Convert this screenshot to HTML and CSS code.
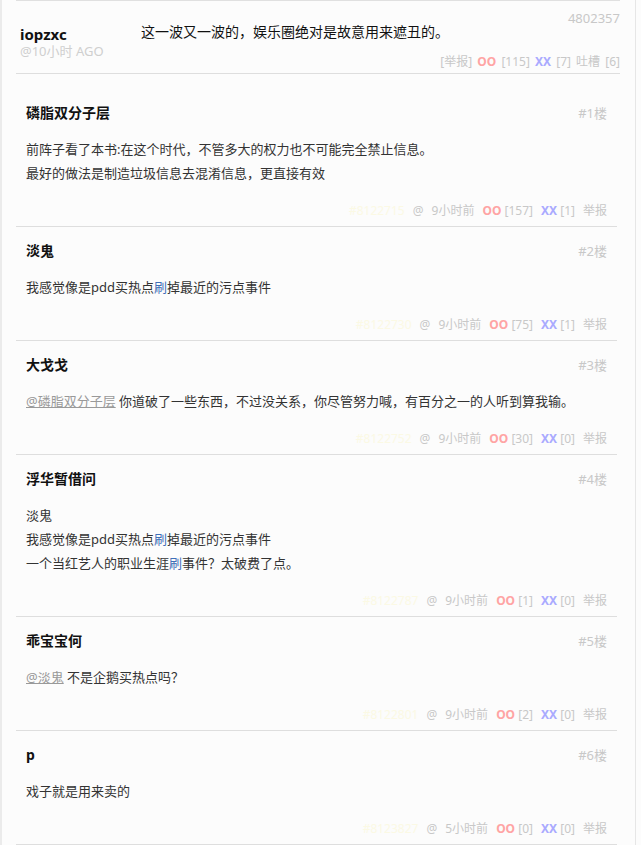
FILE: index.html
```html
<!DOCTYPE html>
<html>
<head>
	<meta charset="utf-8">
	<meta name="viewport" content="width=device-width, initial-scale=1">
	<title>吐槽</title>
	<link rel="stylesheet" href="styles.css">
</head>
<body>
<div class="page">
<div class="thread">

	<!-- main post -->
	<div class="post">
		<div class="post-id">4802357</div>
		<div class="post-row">
			<div class="author">
				<div class="author-name">iopzxc</div>
				<div class="author-time">@10小时 AGO</div>
			</div>
			<div class="post-main">
				<div class="post-text">这一波又一波的，娱乐圈绝对是故意用来遮丑的。</div>
				<div class="post-actions">
					<span class="gray">[举报]</span>
					<span class="oo">OO</span> <span class="gray">[115]</span>
					<span class="xx">XX</span> <span class="gray">[7]</span>
					<span class="gray">吐槽 [6]</span>
				</div>
			</div>
		</div>
	</div>

	<!-- comments -->
	<div class="comments">
		<div class="comment">
			<div class="comment-head">
				<span class="comment-name">磷脂双分子层</span>
				<span class="floor">#1楼</span>
			</div>
			<div class="comment-body">
				前阵子看了本书:在这个时代，不管多大的权力也不可能完全禁止信息。<br>
				最好的做法是制造垃圾信息去混淆信息，更直接有效
			</div>
			<div class="comment-foot">
				<span class="cid">#8122715</span>
				<span class="gray">@</span>
				<span class="gray">9小时前</span>
				<span><span class="oo">OO</span> <span class="gray">[157]</span></span>
				<span><span class="xx">XX</span> <span class="gray">[1]</span></span>
				<span class="gray">举报</span>
			</div>
		</div>

		<div class="comment">
			<div class="comment-head">
				<span class="comment-name">淡鬼</span>
				<span class="floor">#2楼</span>
			</div>
			<div class="comment-body">
				我感觉像是pdd买热点<span class="kw">刷</span>掉最近的污点事件
			</div>
			<div class="comment-foot">
				<span class="cid">#8122730</span>
				<span class="gray">@</span>
				<span class="gray">9小时前</span>
				<span><span class="oo">OO</span> <span class="gray">[75]</span></span>
				<span><span class="xx">XX</span> <span class="gray">[1]</span></span>
				<span class="gray">举报</span>
			</div>
		</div>

		<div class="comment">
			<div class="comment-head">
				<span class="comment-name">大戈戈</span>
				<span class="floor">#3楼</span>
			</div>
			<div class="comment-body">
				<a class="mention" href="#">@磷脂双分子层</a> 你道破了一些东西，不过没关系，你尽管努力喊，有百分之一的人听到算我输。
			</div>
			<div class="comment-foot">
				<span class="cid">#8122752</span>
				<span class="gray">@</span>
				<span class="gray">9小时前</span>
				<span><span class="oo">OO</span> <span class="gray">[30]</span></span>
				<span><span class="xx">XX</span> <span class="gray">[0]</span></span>
				<span class="gray">举报</span>
			</div>
		</div>

		<div class="comment">
			<div class="comment-head">
				<span class="comment-name">浮华暂借问</span>
				<span class="floor">#4楼</span>
			</div>
			<div class="comment-body">
				淡鬼<br>
				我感觉像是pdd买热点<span class="kw">刷</span>掉最近的污点事件<br>
				一个当红艺人的职业生涯<span class="kw">刷</span>事件？太破费了点。
			</div>
			<div class="comment-foot">
				<span class="cid">#8122787</span>
				<span class="gray">@</span>
				<span class="gray">9小时前</span>
				<span><span class="oo">OO</span> <span class="gray">[1]</span></span>
				<span><span class="xx">XX</span> <span class="gray">[0]</span></span>
				<span class="gray">举报</span>
			</div>
		</div>

		<div class="comment">
			<div class="comment-head">
				<span class="comment-name">乖宝宝何</span>
				<span class="floor">#5楼</span>
			</div>
			<div class="comment-body">
				<a class="mention" href="#">@淡鬼</a> 不是企鹅买热点吗？
			</div>
			<div class="comment-foot">
				<span class="cid">#8122801</span>
				<span class="gray">@</span>
				<span class="gray">9小时前</span>
				<span><span class="oo">OO</span> <span class="gray">[2]</span></span>
				<span><span class="xx">XX</span> <span class="gray">[0]</span></span>
				<span class="gray">举报</span>
			</div>
		</div>

		<div class="comment">
			<div class="comment-head">
				<span class="comment-name">p</span>
				<span class="floor">#6楼</span>
			</div>
			<div class="comment-body">
				戏子就是用来卖的
			</div>
			<div class="comment-foot">
				<span class="cid">#8123827</span>
				<span class="gray">@</span>
				<span class="gray">5小时前</span>
				<span><span class="oo">OO</span> <span class="gray">[0]</span></span>
				<span><span class="xx">XX</span> <span class="gray">[0]</span></span>
				<span class="gray">举报</span>
			</div>
		</div>
	</div>

</div>
</div>
</body>
</html>
```

FILE: styles.css
```css
html, *, *::before,
*::after{
	box-sizing: border-box;
}
body{
	margin: 0;
	background: #fcfcfc;
	font-family: "Noto Sans", "Noto Sans CJK SC", sans-serif;
	color: #333;
	overflow: hidden;
}
.page{
	width: 636px;
	min-height: 845px;
	border-left: 2px solid #ebebeb;
	border-right: 1px solid #e6e6e6;
}
.thread{
	margin-left: 14px;
	width: 604px;
}
.gray{
	color: #c8c8c8;
}
.oo{
	color: #ffa4a4;
	font-weight: 700;
}
.xx{
	color: #aaaaff;
	font-weight: 700;
}

/* main post */
.post{
	border-top: 1px solid #e0e0e0;
	border-bottom: 1px solid #dedede;
	padding-bottom: 3px;
}
.post-id{
	text-align: right;
	font-size: 13px;
	line-height: 16px;
	color: #c8c8c8;
	padding-top: 9px;
}
.post-row{
	display: flex;
}
.author{
	width: 125px;
	padding-left: 4px;
	flex-shrink: 0;
}
.author-name{
	font-size: 15px;
	font-weight: 700;
	line-height: 16px;
	color: #111;
}
.author-time{
	margin-top: 2px;
	font-size: 13px;
	line-height: 14px;
	color: #cfcfcf;
}
.post-main{
	flex: 1;
	display: flex;
	flex-direction: column;
}
.post-text{
	font-size: 14px;
	line-height: 16px;
	margin-top: -2px;
	color: #111;
}
.post-actions{
	margin-top: 14px;
	text-align: right;
	font-size: 12px;
	line-height: 16px;
	word-spacing: 2px;
}

/* comments */
.comments{
	padding-top: 15px;
	width: 601px;
}
.comment{
	padding: 14px 10px 7px;
	border-bottom: 1px solid #dedede;
}
.comment-head{
	display: flex;
	justify-content: space-between;
	line-height: 20px;
}
.comment-name{
	font-size: 14px;
	font-weight: 700;
	color: #111;
}
.floor{
	font-size: 13px;
	color: #c8c8c8;
}
.comment-body{
	margin-top: 14px;
	font-size: 13px;
	line-height: 24px;
	color: #333;
}
.mention{
	color: #999;
}
.kw{
	color: #3f6fb8;
}
.comment-foot{
	margin-top: 18px;
	display: flex;
	justify-content: flex-end;
	gap: 8px;
	font-size: 12px;
	line-height: 16px;
}
.cid{
	color: #fbf9e4;
}
```
